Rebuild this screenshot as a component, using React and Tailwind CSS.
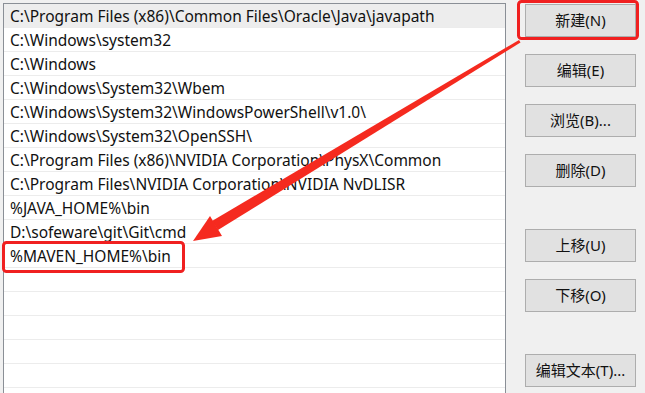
import React from "react";

const rows = [
  "C:\\Program Files (x86)\\Common Files\\Oracle\\Java\\javapath",
  "C:\\Windows\\system32",
  "C:\\Windows",
  "C:\\Windows\\System32\\Wbem",
  "C:\\Windows\\System32\\WindowsPowerShell\\v1.0\\",
  "C:\\Windows\\System32\\OpenSSH\\",
  "C:\\Program Files (x86)\\NVIDIA Corporation\\PhysX\\Common",
  "C:\\Program Files\\NVIDIA Corporation\\NVIDIA NvDLISR",
  "%JAVA_HOME%\\bin",
  "D:\\sofeware\\git\\Git\\cmd",
  "%MAVEN_HOME%\\bin",
  "", "", "", "", "", "",
];

function Btn({ children, className = "" }) {
  return (
    <div
      className={
        "h-[33px] w-[111px] flex items-center justify-center bg-[#e1e1e1] border border-[#adadad] text-[15px] text-[#111] " +
        className
      }
    >
      {children}
    </div>
  );
}

export default function App() {
  return (
    <div
      className="relative w-[645px] h-[393px] overflow-hidden bg-[#f0f0f0] flex"
      style={{ fontFamily: '"Noto Sans", "Noto Sans CJK SC", sans-serif' }}
    >
      <div className="ml-[3px] mt-[3px] w-[503px] h-[400px] bg-white border-l border-t border-r border-[#8a8f96] flex flex-col">
        {rows.map((r, i) => (
          <div
            key={i}
            className={
              "h-[24px] shrink-0 border-b border-[#ececec] pl-[6px] pt-[2px] flex items-center text-[15.5px] text-[#111] whitespace-nowrap leading-none " +
              (i === 0 ? "bg-[#ededed]" : "")
            }
          >
            {r}
          </div>
        ))}
      </div>
      <div className="ml-[19px] mt-[4px] flex flex-col">
        <Btn>新建(N)</Btn>
        <Btn className="mt-[17px]">编辑(E)</Btn>
        <Btn className="mt-[17px]">浏览(B)...</Btn>
        <Btn className="mt-[17px]">删除(D)</Btn>
        <Btn className="mt-[42px]">上移(U)</Btn>
        <Btn className="mt-[17px]">下移(O)</Btn>
        <Btn className="mt-[42px]">编辑文本(T)...</Btn>
      </div>
      <svg className="absolute left-0 top-0 pointer-events-none" width="645" height="393" viewBox="0 0 645 393">
        <rect x="518.5" y="1.5" width="119" height="37" rx="3" fill="none" stroke="#f02020" strokeWidth="3" />
        <rect x="3.5" y="242.5" width="180" height="29" rx="3" fill="none" stroke="#f02020" strokeWidth="3" />
        <polygon points="519,40 520.5,42.5 218,230 212,221" fill="#f52a1f" />
        <polygon points="193,241 210,216 222,236" fill="#f52a1f" />
      </svg>
    </div>
  );
}
